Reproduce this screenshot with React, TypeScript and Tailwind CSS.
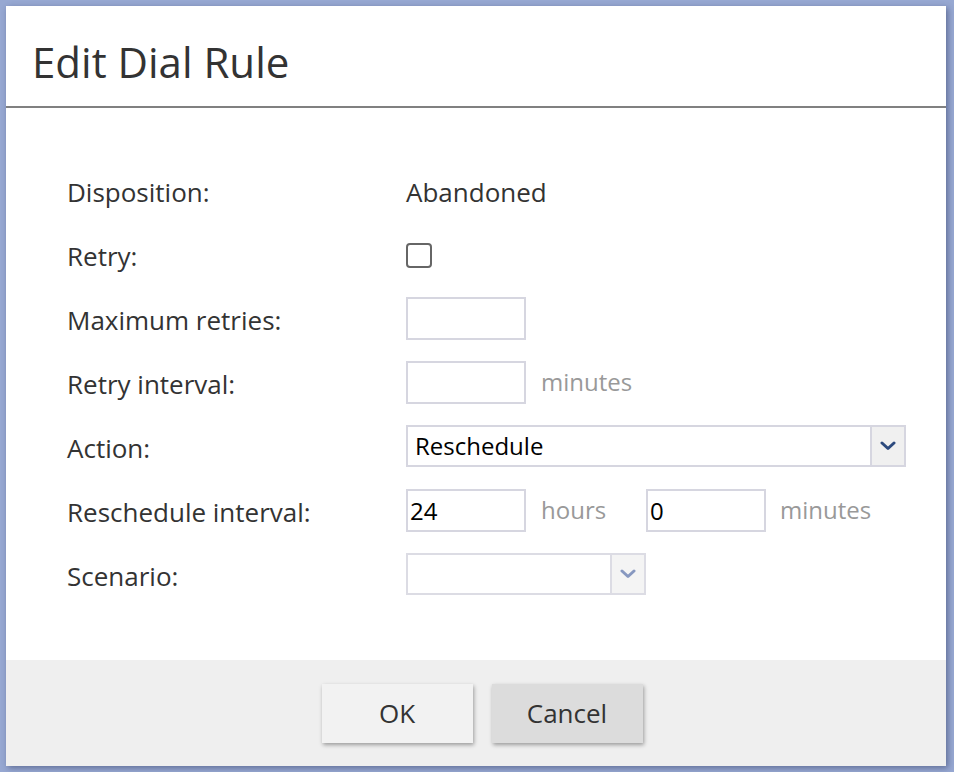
import React, { useState } from 'react';

const font = { fontFamily: '"Open Sans", "Noto Sans", sans-serif' };

const Chevron: React.FC<{ muted?: boolean }> = ({ muted }) => (
  <svg width="16" height="10" viewBox="0 0 16 10">
    <path
      d="M2 2 L8 7.5 L14 2"
      fill="none"
      stroke={muted ? '#8798c0' : '#2c4a7e'}
      strokeWidth="3"
      strokeLinecap="round"
      strokeLinejoin="round"
    />
  </svg>
);

const Row: React.FC<{ label: string; children?: React.ReactNode }> = ({ label, children }) => (
  <div className="flex h-16 items-center">
    <div className="w-[339px] shrink-0 pt-[4px] text-[26px] text-[#333]">{label}</div>
    <div className="flex items-center">{children}</div>
  </div>
);

const inputCls =
  'h-[43px] w-[120px] border-2 border-[#d6d6e0] bg-white px-[2px] text-[24px] text-black outline-none';

const App: React.FC = () => {
  const [retry, setRetry] = useState(false);
  const [maxRetries, setMaxRetries] = useState('');
  const [retryInterval, setRetryInterval] = useState('');
  const [hours, setHours] = useState('24');
  const [minutes, setMinutes] = useState('0');

  return (
    <div className="h-[772px] w-[954px] overflow-hidden bg-[#97a8d2] p-[6px]" style={font}>
      <div className="flex h-[760px] w-[940px] flex-col bg-white shadow-[2px_2px_6px_rgba(30,40,80,0.45)]">
        {/* header */}
        <div className="flex h-[102px] items-center border-b-2 border-[#808080] pl-[26px] pt-[12px]">
          <h1 className="text-[42px] leading-none text-[#333]">Edit Dial Rule</h1>
        </div>

        {/* body */}
        <div className="flex-1 pl-[61px] pt-[50px]">
          <Row label="Disposition:">
            <span className="pt-[4px] text-[26px] text-[#333]">Abandoned</span>
          </Row>
          <Row label="Retry:">
            <button
              type="button"
              onClick={() => setRetry(!retry)}
              className="mt-[2px] h-[25px] w-[26px] rounded-[4px] border-2 border-[#666] bg-white"
            />
          </Row>
          <Row label="Maximum retries:">
            <input className={inputCls} value={maxRetries} onChange={(e) => setMaxRetries(e.target.value)} />
          </Row>
          <Row label="Retry interval:">
            <input className={inputCls} value={retryInterval} onChange={(e) => setRetryInterval(e.target.value)} />
            <span className="ml-[15px] text-[24px] text-[#999]">minutes</span>
          </Row>
          <Row label="Action:">
            <div className="flex h-[42px] w-[500px] border-2 border-[#d6d6e0] bg-white">
              <div className="flex flex-1 items-center pl-[7px] text-[24px] text-black">Reschedule</div>
              <div className="flex w-[34px] items-center justify-center border-l-2 border-[#d6d6e0] bg-[#f0f0f0]">
                <Chevron />
              </div>
            </div>
          </Row>
          <Row label="Reschedule interval:">
            <input className={inputCls} value={hours} onChange={(e) => setHours(e.target.value)} />
            <span className="ml-[15px] w-[105px] text-[24px] text-[#999]">hours</span>
            <input className={inputCls} value={minutes} onChange={(e) => setMinutes(e.target.value)} />
            <span className="ml-[14px] text-[24px] text-[#999]">minutes</span>
          </Row>
          <Row label="Scenario:">
            <div className="flex h-[42px] w-[240px] border-2 border-[#dcdce4] bg-white">
              <div className="flex-1" />
              <div className="flex w-[34px] items-center justify-center border-l-2 border-[#dcdce4] bg-[#f4f4f4]">
                <Chevron muted />
              </div>
            </div>
          </Row>
        </div>

        {/* footer */}
        <div className="flex h-[106px] justify-center gap-[19px] bg-[#efefef] pl-[12px] pt-[24px]">
          <button
            type="button"
            className="h-[59px] w-[151px] bg-[#f2f2f2] text-[26px] text-[#333] shadow-[1px_2px_4px_rgba(0,0,0,0.35)]"
          >
            OK
          </button>
          <button
            type="button"
            className="h-[59px] w-[151px] bg-[#dcdcdc] text-[26px] text-[#333] shadow-[1px_2px_4px_rgba(0,0,0,0.35)]"
          >
            Cancel
          </button>
        </div>
      </div>
    </div>
  );
};

export default App;
